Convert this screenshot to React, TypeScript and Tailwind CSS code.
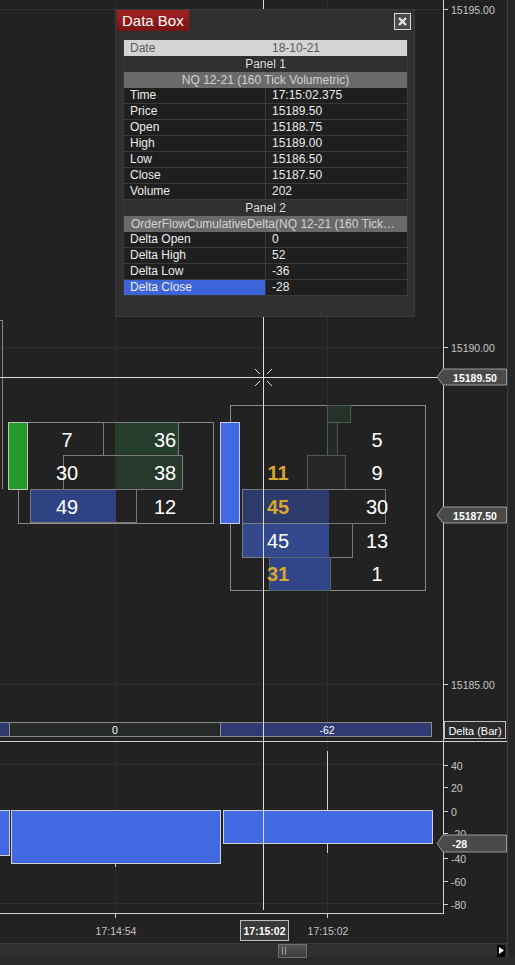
import React from "react";

const FONT = '"Liberation Sans", Arial, sans-serif';

type Row = { label: string; value: string; active?: boolean };

const panel1Rows: Row[] = [
  { label: "Time", value: "17:15:02.375" },
  { label: "Price", value: "15189.50" },
  { label: "Open", value: "15188.75" },
  { label: "High", value: "15189.00" },
  { label: "Low", value: "15186.50" },
  { label: "Close", value: "15187.50" },
  { label: "Volume", value: "202" },
];

const panel2Rows: Row[] = [
  { label: "Delta Open", value: "0" },
  { label: "Delta High", value: "52" },
  { label: "Delta Low", value: "-36" },
  { label: "Delta Close", value: "-28", active: true },
];

function DataRow({ row }: { row: Row }) {
  return (
    <div className="grid h-[16px] grid-cols-[142px_1fr] border-b border-[#3a3a3a] text-[12px] leading-[15px] text-[#ececec]">
      <div
        className={
          "border-r border-[#3a3a3a] pl-[6px] " +
          (row.active ? "bg-[#3d64d8]" : "bg-[#1f1f1f]")
        }
      >
        {row.label}
      </div>
      <div className="bg-[#1f1f1f] pl-[6px]">{row.value}</div>
    </div>
  );
}

function DataBox() {
  return (
    <div className="absolute left-[115px] top-[9px] flex h-[308px] w-[300px] flex-col border border-[#3b3b3b] bg-[#303030]">
      {/* barre de titre */}
      <div className="flex h-[30px] items-start justify-between pl-[1px] pr-[3px]">
        <div className="h-[21px] w-[72px] bg-gradient-to-b from-[#a52222] to-[#7a1313] pl-[5px] text-[15px] leading-[21px] text-white">
          Data Box
        </div>
        <div className="mt-[3px] flex h-[17px] w-[17px] items-center justify-center border border-[#d8d8d8] bg-[#4a4a4a]">
          <svg width="11" height="11" viewBox="0 0 11 11">
            <path d="M2 2 L9 9 M9 2 L2 9" stroke="#e6e6e6" strokeWidth="2.4" />
          </svg>
        </div>
      </div>

      {/* tableau */}
      <div className="ml-[7px] w-[285px] border-x border-[#3a3a3a]">
        <div className="grid h-[16px] grid-cols-[142px_1fr] bg-[#d4d4d4] text-[12px] leading-[16px] text-[#5a5a5a]">
          <div className="pl-[6px]">Date</div>
          <div className="pl-[6px]">18-10-21</div>
        </div>
        <div className="h-[16px] bg-[#303030] text-center text-[12px] leading-[16px] text-[#dcdcdc]">
          Panel 1
        </div>
        <div className="h-[16px] bg-[#6a6a6a] text-center text-[12px] leading-[16px] text-[#d2d2d2]">
          NQ 12-21 (160 Tick Volumetric)
        </div>
        {panel1Rows.map((r) => (
          <DataRow key={r.label} row={r} />
        ))}
        <div className="h-[16px] bg-[#303030] text-center text-[12px] leading-[16px] text-[#dcdcdc]">
          Panel 2
        </div>
        <div className="h-[16px] overflow-hidden whitespace-nowrap bg-[#6a6a6a] pl-[7px] text-[12px] leading-[16px] text-[#d2d2d2]">
          OrderFlowCumulativeDelta(NQ 12-21 (160 Tick…
        </div>
        {panel2Rows.map((r) => (
          <DataRow key={r.label} row={r} />
        ))}
      </div>
    </div>
  );
}

function PriceTag({ y, text, h = 16 }: { y: number; text: string; h?: number }) {
  const top = y - h / 2;
  return (
    <g>
      <polygon
        points={`437,${y} 443,${top} 506.5,${top} 506.5,${top + h} 443,${top + h}`}
        fill="#4a4a4a"
        stroke="#9a9a9a"
      />
      <text x={475} y={y + 0.5} textAnchor="middle" dominantBaseline="central" fontSize={10.5} fill="#ffffff" fontWeight={700}>
        {text}
      </text>
    </g>
  );
}

function Num({ x, y, v, gold }: { x: number; y: number; v: string; gold?: boolean }) {
  return (
    <text
      x={x}
      y={y}
      textAnchor="middle"
      dominantBaseline="central"
      fontSize={20}
      fontWeight={gold ? 700 : 400}
      fill={gold ? "#d9a62e" : "#ffffff"}
    >
      {v}
    </text>
  );
}

function Chart() {
  const priceTicks = [
    { y: 9.5, t: "15195.00" },
    { y: 347.5, t: "15190.00" },
    { y: 684.5, t: "15185.00" },
  ];
  const deltaTicks = [
    { y: 765.5, t: "40" },
    { y: 787.5, t: "20" },
    { y: 811.5, t: "0" },
    { y: 833.5, t: "-20" },
    { y: 858.5, t: "-40" },
    { y: 881.5, t: "-60" },
    { y: 904.5, t: "-80" },
  ];

  return (
    <svg width={507} height={943} className="block" fontFamily={FONT}>
      <g shapeRendering="crispEdges">
        {/* grille */}
        <g stroke="#2f2f2f">
          <line x1={0} y1={9.5} x2={443} y2={9.5} />
          <line x1={0} y1={347.5} x2={443} y2={347.5} />
          <line x1={0} y1={684.5} x2={443} y2={684.5} />
          <line x1={0} y1={764.5} x2={443} y2={764.5} />
          <line x1={0} y1={903.5} x2={443} y2={903.5} />
          <line x1={115.5} y1={0} x2={115.5} y2={913} />
          <line x1={327.5} y1={0} x2={327.5} y2={913} />
        </g>

        {/* bougie précédente coupée à gauche */}
        <polyline points="0,320.5 2.5,320.5 2.5,489" fill="none" stroke="#8a8a8a" />

        {/* footprint 17:14:54 */}
        <rect x={18.5} y={422.5} width={194.5} height={100.5} fill="none" stroke="#8a8a8a" />
        <rect x={115} y={423} width={63} height={32} fill="#263f2c" />
        <rect x={103.5} y={422.5} width={75} height={33} fill="none" stroke="#7a7a7a" />
        <rect x={115} y={456} width={67} height={33} fill="#29382c" />
        <rect x={63.5} y={455.5} width={119} height={33.5} fill="none" stroke="#7a7a7a" />
        <rect x={30.5} y={489.5} width={85} height={33} fill="#2f4283" />
        <rect x={30.5} y={489.5} width={106} height={33} fill="none" stroke="#7a7a7a" />
        <rect x={8.5} y={422.5} width={19} height={67} fill="#249a2a" stroke="#c4c4c4" />

        {/* footprint 17:15:02 */}
        <rect x={230.5} y={405.5} width={195} height={184.5} fill="none" stroke="#8a8a8a" />
        <rect x={327.5} y={405.5} width={23} height={17} fill="#243229" stroke="#4e5a52" />
        <rect x={327.5} y={422.5} width={10} height={33} fill="#232925" stroke="#4e5a52" />
        <rect x={307.5} y={455.5} width={38} height={33.5} fill="#242726" stroke="#555" />
        <rect x={242.5} y={489.5} width={86} height={33.5} fill="#2c3a6c" />
        <rect x={242.5} y={489.5} width={143} height={33.5} fill="none" stroke="#7a7a7a" />
        <rect x={242.5} y={523.5} width={86} height={33.5} fill="#34488d" />
        <rect x={242.5} y={523.5} width={110} height={33.5} fill="none" stroke="#7a7a7a" />
        <rect x={269.5} y={557.5} width={61} height={32.5} fill="#304588" stroke="#566" />
        <rect x={220.5} y={422.5} width={19} height={100.5} fill="#4169e1" stroke="#c8cce0" />

        {/* barre delta */}
        <rect x={-1} y={722.5} width={10.5} height={14} fill="#2e3a6e" stroke="#8a8a8a" />
        <rect x={9.5} y={722.5} width={211} height={14} fill="#262a27" stroke="#8a8a8a" />
        <rect x={220.5} y={722.5} width={211} height={14} fill="#2f3b72" stroke="#8a8a8a" />
        <rect x={444.5} y={721.5} width={61} height={17} fill="#2a2a2a" stroke="#bdbdbd" />

        {/* panneau inférieur */}
        <line x1={327.5} y1={751} x2={327.5} y2={853} stroke="#cfcfcf" />
        <line x1={115.5} y1={863} x2={115.5} y2={867} stroke="#cfcfcf" />
        <rect x={-1} y={810.5} width={10.5} height={44.5} fill="#4169e1" stroke="#d0d0d0" />
        <rect x={11.5} y={810.5} width={209} height={52.5} fill="#4169e1" stroke="#d0d0d0" />
        <rect x={223.5} y={810.5} width={209} height={32.5} fill="#4169e1" stroke="#d0d0d0" />

        {/* axes */}
        <g stroke="#cfcfcf">
          <line x1={443.5} y1={0} x2={443.5} y2={913} />
          <line x1={0} y1={741.5} x2={507} y2={741.5} />
          <line x1={0} y1={913.5} x2={444} y2={913.5} />
          <line x1={115.5} y1={913} x2={115.5} y2={918} />
          <line x1={327.5} y1={913} x2={327.5} y2={918} />
          {priceTicks.map((p) => (
            <line key={p.t} x1={443} y1={p.y} x2={448} y2={p.y} />
          ))}
          {deltaTicks.map((p) => (
            <line key={p.t} x1={443} y1={p.y} x2={448} y2={p.y} />
          ))}
        </g>

        {/* réticule */}
        <g stroke="#dcdcdc">
          <line x1={263.5} y1={0} x2={263.5} y2={910} />
          <line x1={0} y1={377.5} x2={437} y2={377.5} />
        </g>
      </g>

      <g stroke="#e6e6e6" strokeWidth={1}>
        <line x1={255} y1={369} x2={260} y2={374} />
        <line x1={272} y1={369} x2={267} y2={374} />
        <line x1={255} y1={386} x2={260} y2={381} />
        <line x1={272} y1={386} x2={267} y2={381} />
      </g>

      {/* chiffres footprint */}
      <Num x={67} y={440} v="7" />
      <Num x={165} y={440} v="36" />
      <Num x={67} y={473} v="30" />
      <Num x={165} y={473} v="38" />
      <Num x={67} y={507} v="49" />
      <Num x={165} y={507} v="12" />

      <Num x={377} y={440} v="5" />
      <Num x={278} y={473} v="11" gold />
      <Num x={377} y={473} v="9" />
      <Num x={278} y={507} v="45" gold />
      <Num x={377} y={507} v="30" />
      <Num x={278} y={541} v="45" />
      <Num x={377} y={541} v="13" />
      <Num x={278} y={574} v="31" gold />
      <Num x={377} y={574} v="1" />

      {/* textes barre delta */}
      <text x={115} y={730} textAnchor="middle" dominantBaseline="central" fontSize={10.5} fill="#ffffff">
        0
      </text>
      <text x={327} y={730} textAnchor="middle" dominantBaseline="central" fontSize={10.5} fill="#ffffff">
        -62
      </text>
      <text x={475} y={730.5} textAnchor="middle" dominantBaseline="central" fontSize={11} fill="#ffffff">
        Delta (Bar)
      </text>

      {/* libellés axes */}
      <g fontSize={10.5} fill="#c6c6c6">
        {priceTicks.map((p) => (
          <text key={p.t} x={451} y={p.y} dominantBaseline="central">
            {p.t}
          </text>
        ))}
        {deltaTicks.map((p) => (
          <text key={p.t} x={451} y={p.y} dominantBaseline="central">
            {p.t}
          </text>
        ))}
        <text x={116} y={931} textAnchor="middle" dominantBaseline="central">
          17:14:54
        </text>
        <text x={328} y={931} textAnchor="middle" dominantBaseline="central">
          17:15:02
        </text>
      </g>

      <PriceTag y={377} text="15189.50" />
      <PriceTag y={515} text="15187.50" />
      <g>
        <polygon points="437,843.5 443,835 506.5,835 506.5,852 443,852" fill="#4a4a4a" stroke="#9a9a9a" />
        <text x={452} y={844} dominantBaseline="central" fontSize={10.5} fontWeight={700} fill="#ffffff">
          -28
        </text>
      </g>

      <rect x={240.5} y={920.5} width={48} height={20} fill="#3a3a3a" stroke="#bdbdbd" shapeRendering="crispEdges" />
      <text x={264.5} y={930.5} textAnchor="middle" dominantBaseline="central" fontSize={10.5} fontWeight={700} fill="#ffffff">
        17:15:02
      </text>
    </svg>
  );
}

function ScrollBar() {
  return (
    <div className="relative flex h-[14px] w-[507px] items-center border-t border-[#3a3a3a] bg-[#2f2f2f]">
      <div className="ml-[278px] flex h-[14px] w-[29px] items-center gap-[2px] border border-[#707070] bg-gradient-to-b from-[#555] to-[#3c3c3c] pl-[3px]">
        <span className="h-[8px] w-px bg-[#a0a0a0]" />
        <span className="h-[8px] w-px bg-[#a0a0a0]" />
      </div>
      <div className="ml-auto mr-[2px] flex h-[12px] w-[8px] items-center justify-center bg-black">
        <svg width="5" height="7" viewBox="0 0 5 7">
          <path d="M0 0 L5 3.5 L0 7 Z" fill="#ffffff" />
        </svg>
      </div>
    </div>
  );
}

export default function App() {
  return (
    <div className="flex h-[965px] w-[515px] flex-col overflow-hidden bg-[#2a2a2a]" style={{ fontFamily: FONT }}>
      <div className="flex h-[943px]">
        <div className="relative w-[507px] bg-[#222222]">
          <Chart />
          <DataBox />
        </div>
        <div className="flex-1 border-l border-[#3c3c3c] bg-[#262626]" />
      </div>
      <div className="flex">
        <ScrollBar />
        <div className="flex-1 border-l border-[#3c3c3c] bg-[#262626]" />
      </div>
      <div className="flex-1 bg-[#2a2a2a]" />
    </div>
  );
}
